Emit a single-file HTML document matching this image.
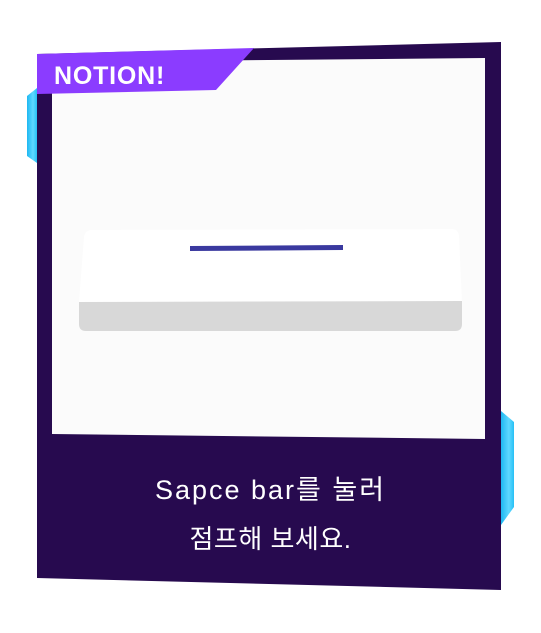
<!DOCTYPE html>
<html><head><meta charset="utf-8"><style>
html,body{margin:0;padding:0;background:#fff;}
body{width:541px;height:633px;overflow:hidden;position:relative;}
svg{position:absolute;left:0;top:0;}
.t{position:absolute;left:0;width:541px;text-align:center;color:#fff;font-family:"Liberation Sans","Noto Sans CJK KR",sans-serif;font-size:26px;line-height:30px;}
</style></head><body>
<svg width="541" height="633" viewBox="0 0 541 633">
<defs>
<linearGradient id="cy" x1="0" x2="1" y1="0" y2="0">
<stop offset="0" stop-color="#1fb8f2"/><stop offset="0.6" stop-color="#5fd8ff"/><stop offset="1" stop-color="#27c0f5"/>
</linearGradient>
</defs>
<polygon points="37,88 27,96 27,156 37,163" fill="url(#cy)"/>
<polygon points="501,411 514,422 514,507 501,525" fill="url(#cy)"/>
<polygon points="37,54 501,42 501,590 37,578" fill="#270a4f"/>
<polygon points="52,62 485,58 485,439 52,434" fill="#fbfbfb"/>
<polygon points="37,54 254,48 216,90 37,94" fill="#8b3cff"/>
<path d="M92,230 L452,229 Q458,229 459,236 L462,302 L79,302 L84,237 Q85,230 92,230 Z" fill="#ffffff"/>
<path d="M79,302 L462,301 L462,324 Q462,331 455,331 L86,331 Q79,331 79,324 Z" fill="#d8d8d8"/>
<polygon points="190,246 343,245 343,250 190,251" fill="#3a399f"/>
<text x="54" y="84" fill="#fff" font-family="Liberation Sans, sans-serif" font-weight="bold" font-size="25" letter-spacing="0.8">NOTION!</text>
</svg>
<div class="t" style="top:475px;font-size:27px;letter-spacing:2px;">Sapce bar를 눌러</div>
<div class="t" style="top:524px;letter-spacing:0.5px;">점프해 보세요.</div>
</body></html>
